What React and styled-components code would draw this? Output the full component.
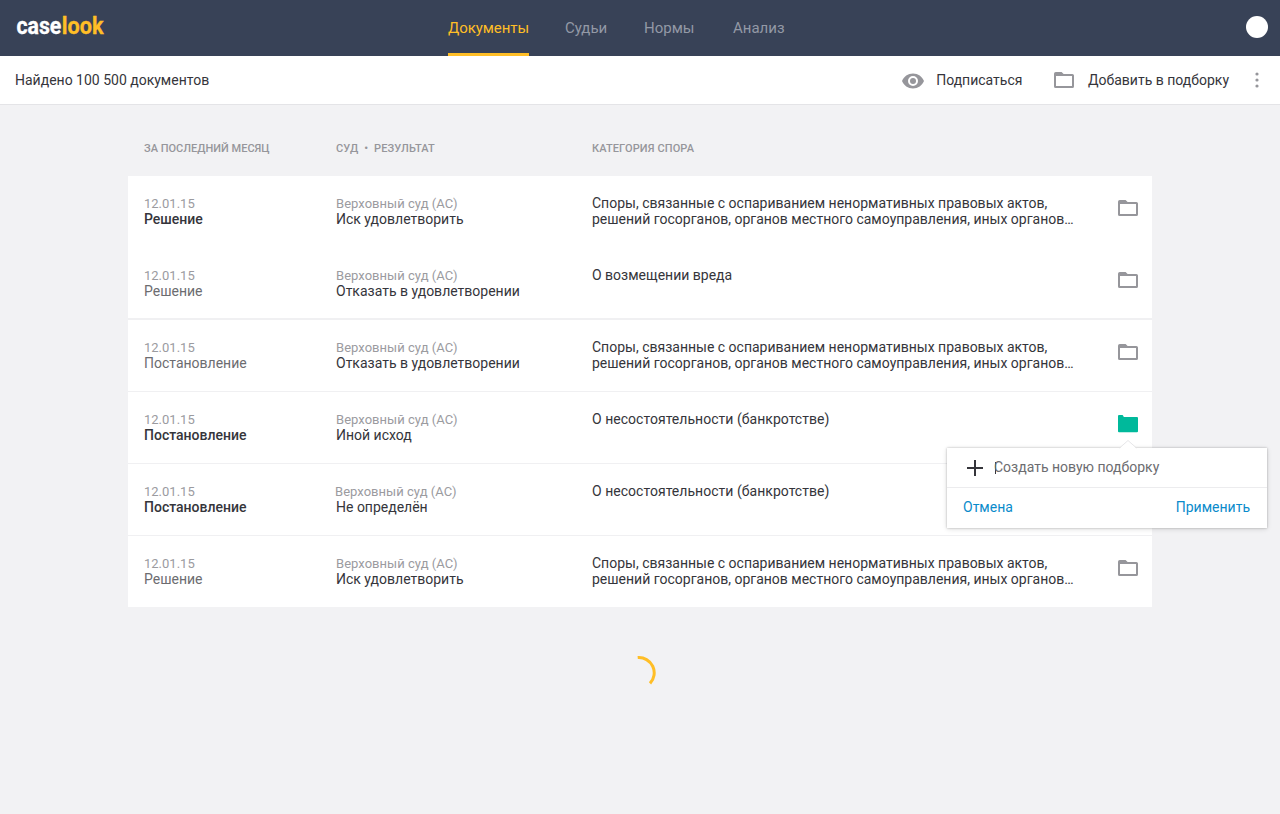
import React from "react";
import styled, { createGlobalStyle } from "styled-components";

const GlobalStyle = createGlobalStyle`
  *, *::before, *::after { box-sizing: border-box; }
  body {
    margin: 0;
    background: #f2f2f4;
    color: #35353b;
    font: 14px/16px Roboto, "Liberation Sans", sans-serif;
  }
  button { font: inherit; border: 0; padding: 0; background: none; cursor: pointer; }
  svg { display: block; }
`;

const Page = styled.div`
  min-height: 814px;
  overflow: hidden;
`;

const Header = styled.header`
  display: grid;
  grid-template-columns: 448px 1fr auto;
  height: 56px;
  padding-right: 12px;
  background: #384257;
`;

const Logo = styled.svg`
  width: 110px;
  height: 56px;
  font: 700 23px Roboto, sans-serif;
`;

const Nav = styled.nav`
  display: flex;
`;

const Tab = styled.a`
  width: ${(p) => p.$width}px;
  height: 56px;
  margin-right: ${(p) => p.$gap}px;
  border-bottom: 3px solid ${(p) => (p.$active ? "#ffbe26" : "transparent")};
  color: ${(p) => (p.$active ? "#ffbe26" : "#9399a6")};
  font-size: 15px;
  line-height: 56px;
  letter-spacing: ${(p) => p.$spacing ?? 0}px;
  white-space: nowrap;
`;

const Avatar = styled.div`
  width: 22px;
  height: 22px;
  margin-top: 16px;
  border-radius: 50%;
  background: #fff;
`;

const Toolbar = styled.div`
  display: flex;
  align-items: center;
  height: 49px;
  padding: 0 21.5px 0 15px;
  border-bottom: 1px solid #e4e4e7;
  background: #fff;
`;

const Found = styled.div`
  flex: 1;
`;

const Action = styled.button`
  display: flex;
  align-items: center;
  gap: ${(p) => p.$gap}px;
  margin-right: ${(p) => p.$after}px;
  color: #35353b;
`;

const Main = styled.main`
  width: 1024px;
  margin: 0 auto;
`;

const columns = "192px 256px 526px 20px";

const TableHead = styled.div`
  display: grid;
  grid-template-columns: ${columns};
  height: 71px;
  padding: 36px 14px 0 16px;
  color: #96969b;
  font-size: 11px;
  font-weight: 500;
`;

const HeadCell = styled.span`
  letter-spacing: ${(p) => p.$spacing ?? 0}px;
`;

const Row = styled.div`
  position: relative;
  display: grid;
  grid-template-columns: ${columns};
  height: 72px;
  padding: 19px 14px 0 16px;
  border-bottom: ${(p) => p.$line}px solid #f0f0f2;
  background: #fff;

  &:last-child { height: 71px; }
`;

const Muted = styled.div`
  height: 16px;
  color: #9b9b9f;
  font-size: 13px;
  line-height: 18px;
  letter-spacing: ${(p) => p.$spacing ?? 0}px;
  margin-left: ${(p) => p.$shift ?? 0}px;
`;

const Kind = styled.div`
  color: ${(p) => (p.$unread ? "#35353b" : "#6c6c70")};
  font-weight: ${(p) => (p.$unread ? 500 : 400)};
`;

const Category = styled.div`
  white-space: pre-line;
  letter-spacing: ${(p) => p.$spacing ?? 0}px;
`;

const FolderButton = styled.button`
  width: 20px;
  height: 17px;
  margin-top: 4px;
`;

const Popover = styled.div`
  position: absolute;
  z-index: 2;
  top: 56px;
  left: 819px;
  width: 320px;
  height: 80px;
  background: #fff;
  box-shadow: 0 0 2px rgba(0, 0, 0, 0.25), 0 1px 5px rgba(0, 0, 0, 0.14);
`;

const Arrow = styled.svg`
  position: absolute;
  top: -8px;
  left: 172px;
`;

const CreateLine = styled.div`
  display: flex;
  align-items: center;
  height: 40px;
  padding-left: 20px;
  border-bottom: 1px solid #ececee;
  color: #6c6c70;
`;

const Placeholder = styled.span`
  margin-left: -2px;
  padding-bottom: 1px;
`;

const Caret = styled.span`
  width: 1px;
  height: 12px;
  margin-left: 12px;
  background: #35353b;
`;

const PopoverActions = styled.div`
  display: flex;
  justify-content: space-between;
  align-items: center;
  height: 38px;
  padding: 0 17px 0 16px;
`;

const LinkButton = styled.button`
  color: #0a8bcb;
`;

const Loader = styled.svg`
  margin: 49px auto 0;
`;

function Folder({ filled }) {
  return filled ? (
    <svg width="20" height="18" viewBox="0 0 20 18">
      <path d="M0 1Q0 0 1 0H4.2Q5 0 5.3 1L5.8 2H19Q20 2 20 3V16.2Q20 17.3 19 17.3H1Q0 17.3 0 16.2Z" fill="#00b99b" />
    </svg>
  ) : (
    <svg width="20" height="16" viewBox="0 0 20 16">
      <path fillRule="evenodd" d="M1.8 0H7.6L9.6 2H18.4Q20 2 20 3.6V14.4Q20 16 18.4 16H1.6Q0 16 0 14.4V1.8Q0 0 1.8 0ZM2 4V14H18V4Z" fill="#96969b" />
    </svg>
  );
}

function Eye() {
  return (
    <svg width="22" height="18" viewBox="0 -2 22 18">
      <path fillRule="evenodd" d="M11 .5C6 .5 1.8 3.6 0 8C1.8 12.4 6 15.5 11 15.5S20.2 12.4 22 8C20.2 3.6 16 .5 11 .5ZM11 13A5 5 0 1 1 11 3A5 5 0 0 1 11 13Z" fill="#96969b" />
      <circle cx="11" cy="8" r="3" fill="#96969b" />
    </svg>
  );
}

const LONG =
  "Споры, связанные с оспариванием ненормативных правовых актов,\nрешений госорганов, органов местного самоуправления, иных органов…";

const documents = [
  { kind: "Решение", unread: true, result: "Иск удовлетворить", category: LONG, line: 0 },
  { kind: "Решение", result: "Отказать в удовлетворении", category: "О возмещении вреда", line: 2 },
  { kind: "Постановление", result: "Отказать в удовлетворении", category: LONG, line: 1 },
  { kind: "Постановление", unread: true, result: "Иной исход", category: "О несостоятельности (банкротстве)", spacing: 0.03, line: 1, open: true },
  { kind: "Постановление", unread: true, result: "Не определён", category: "О несостоятельности (банкротстве)", spacing: 0.03, line: 1, shift: -1 },
  { kind: "Решение", result: "Иск удовлетворить", category: LONG, line: 0 },
];

function CollectionPopover() {
  return (
    <Popover>
      <Arrow width="18" height="9" viewBox="0 0 18 9">
        <path d="M0 9L9 0L18 9Z" fill="#fff" />
        <path d="M.5 8L9 .5L17.5 8" fill="none" stroke="#e0e0e2" strokeWidth=".8" />
      </Arrow>
      <CreateLine>
        <svg width="16" height="16" viewBox="0 0 16 16">
          <path d="M8 0V16M0 8H16" stroke="#35353b" strokeWidth="2" />
        </svg>
        <Caret />
        <Placeholder>Создать новую подборку</Placeholder>
      </CreateLine>
      <PopoverActions>
        <LinkButton>Отмена</LinkButton>
        <LinkButton>Применить</LinkButton>
      </PopoverActions>
    </Popover>
  );
}

export default function App() {
  return (
    <Page>
      <GlobalStyle />
      <Header>
        <Logo viewBox="0 0 110 56" aria-label="caselook">
          <text x="16.4" y="34" fill="#fff" stroke="#fff" strokeWidth=".3" textLength="45" lengthAdjust="spacingAndGlyphs">case</text>
          <text x="61.8" y="34" fill="#ffbe26" stroke="#ffbe26" strokeWidth=".3" textLength="41.8" lengthAdjust="spacingAndGlyphs">look</text>
        </Logo>
        <Nav>
          <Tab $active $width={81} $gap={36} $spacing={-0.06}>Документы</Tab>
          <Tab $width={42} $gap={37} $spacing={-0.04}>Судьи</Tab>
          <Tab $width={51} $gap={38}>Нормы</Tab>
          <Tab $width={52} $gap={0}>Анализ</Tab>
        </Nav>
        <Avatar />
      </Header>
      <Toolbar>
        <Found>Найдено 100 500 документов</Found>
        <Action $gap={12} $after={31.5}><Eye />Подписаться</Action>
        <Action $gap={14} $after={25.5}><Folder />Добавить в подборку</Action>
        <svg width="4" height="16" viewBox="0 0 4 16" fill="#96969b">
          <circle cx="2" cy="2" r="1.6" />
          <circle cx="2" cy="8" r="1.6" />
          <circle cx="2" cy="14" r="1.6" />
        </svg>
      </Toolbar>
      <Main>
        <TableHead>
          <HeadCell>ЗА ПОСЛЕДНИЙ МЕСЯЦ</HeadCell>
          <HeadCell $spacing={0.16}>СУД&nbsp; •&nbsp; РЕЗУЛЬТАТ</HeadCell>
          <HeadCell $spacing={0.12}>КАТЕГОРИЯ СПОРА</HeadCell>
        </TableHead>
        <div>
          {documents.map((d, i) => (
            <Row key={i} $line={d.line}>
              <div>
                <Muted>12.01.15</Muted>
                <Kind $unread={d.unread}>{d.kind}</Kind>
              </div>
              <div>
                <Muted $shift={d.shift} $spacing={0.03}>Верховный суд (АС)</Muted>
                <div>{d.result}</div>
              </div>
              <Category $spacing={d.spacing}>{d.category}</Category>
              <FolderButton aria-label="Добавить в подборку"><Folder filled={d.open} /></FolderButton>
              {d.open && <CollectionPopover />}
            </Row>
          ))}
        </div>
        <Loader width="34" height="34" viewBox="0 0 34 34">
          <path d="M15.5 1.6A15.3 15.3 0 0 1 27.8 27.4" transform="translate(-.8 0)" fill="none" stroke="#ffbe26" strokeWidth="3" />
        </Loader>
      </Main>
    </Page>
  );
}
